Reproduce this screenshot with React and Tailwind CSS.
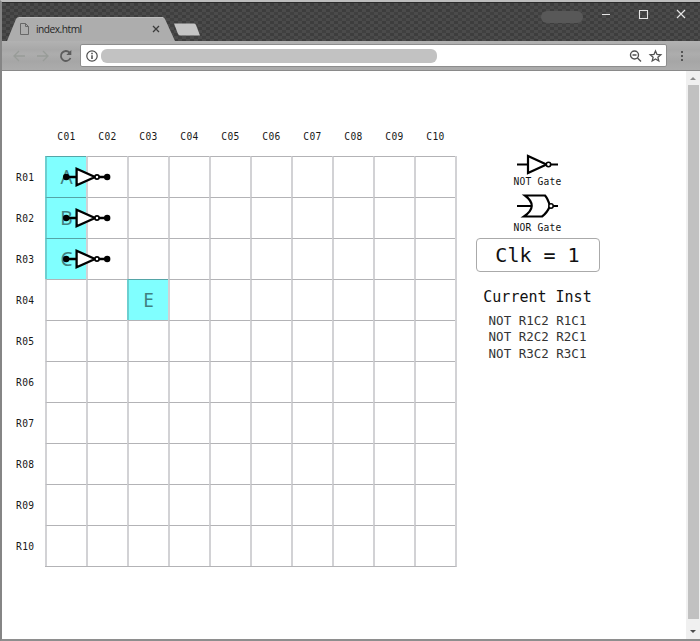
const labels = ['01', '02', '03', '04', '05', '06', '07', '08', '09', '10'];
const letters = { '0-0': 'A', '1-0': 'B', '2-0': 'C', '3-2': 'E' };

function NotWire() {
  return (
    <svg className="absolute left-[13px] top-[8px] z-10 h-[24px] w-[52px]" viewBox="0 0 52 24" fill="none" stroke="#000">
      <path d="M6 12H16M37 12H47" strokeWidth="2.6" />
      <path d="M16.6 3.7V20.3L35 12Z" fill="#fff" strokeWidth="2.3" />
      <circle cx="37" cy="12" r="2.1" fill="#fff" strokeWidth="1.7" />
      <circle cx="6.2" cy="12" r="3.2" fill="#000" stroke="none" />
      <circle cx="47.2" cy="12" r="3.2" fill="#000" stroke="none" />
    </svg>
  );
}

function TitleBar() {
  return (
    <div className="relative flex h-[39px] shrink-0 items-end border-t border-[#2c2c2c] bg-[#454545] bg-[conic-gradient(#3d3d3d_25%,#4b4b4b_25%_50%,#404040_50%_75%,#4b4b4b_75%)] bg-[length:8px_6px]">
      <div className="relative ml-[5px] h-[24px] w-[168px]">
        <svg className="absolute inset-0 h-[24px] w-[168px]" viewBox="0 0 168 24">
          <path d="M0 24L9 2Q10 0 12 0H155Q157 0 158 2L168 24Z" fill="#adadad" />
          <path d="M12 .5H156" stroke="#bdbdbd" />
        </svg>
        <div className="relative flex h-[24px] items-center pl-[13px] text-[10.2px] text-[#252525]">
          <svg className="mr-[7px] h-[12px] w-[9px]" viewBox="0 0 9 12" fill="none" stroke="#686868">
            <path d="M.5 .5H5.5L8.5 3.5V11.5H.5ZM5.5 .5V3.5H8.5" />
          </svg>
          <span className="w-[109px] pt-px tracking-[-0.5px]">index.html</span>
          <svg className="ml-[7px] h-[8px] w-[8px]" viewBox="0 0 8 8" stroke="#3b3b3b" strokeWidth="1.3">
            <path d="M1 1L7 7M7 1L1 7" />
          </svg>
        </div>
      </div>
      <svg className="mb-[5px] -ml-[2px] h-[13px] w-[29px]" viewBox="0 0 29 13">
        <path d="M1 .5H21Q22.5 .5 23 2L27 12.5H8Q6 12.5 5 11Z" fill="#c4c4c4" />
      </svg>
      <div className="mb-[18px] ml-auto h-[12px] w-[42px] rounded-full bg-[#585858]" />
      <svg className="mb-[21px] ml-[17px] h-[12px] w-[86px]" viewBox="0 0 86 12" fill="none" stroke="#e5e5e5" strokeWidth="1.1">
        <path d="M2 6.5H10M77 2L85 10M85 2L77 10" />
        <path d="M39.5 2.5H47.5V10.5H39.5Z" />
      </svg>
      <div className="w-[14px]" />
    </div>
  );
}

function Toolbar() {
  return (
    <div className="flex h-[30px] shrink-0 items-center border-b border-[#8a8a8a] bg-[linear-gradient(#b2b2b2,#a8a8a8_30%,#adadad_45%,#a6a6a6_70%,#acacac)]">
      <svg className="ml-[11px] h-[18px] w-[64px]" viewBox="0 0 64 18" fill="none" stroke="#989c98" strokeWidth="1.3">
        <path d="M12 9H1M6 4L1 9L6 14M24 9H35M30 4L35 9L30 14" />
        <path d="M56.5 5.5A5 5 0 1 0 57.5 11" stroke="#5c5c5c" strokeWidth="1.8" />
        <path d="M58.3 3V8H53.3Z" fill="#5c5c5c" stroke="none" />
      </svg>
      <div className="ml-[3px] flex h-[23px] w-[587px] items-center rounded-[2px] border border-[#8d8d8d] bg-white">
        <svg className="ml-[5px] h-[12px] w-[12px]" viewBox="0 0 12 12" fill="none" stroke="#4b4b4b">
          <circle cx="6" cy="6" r="5.2" strokeWidth="1.2" />
          <path d="M6 5.2V9M6 2.8V4.2" strokeWidth="1.5" />
        </svg>
        <div className="ml-[3px] h-[14px] w-[336px] rounded-[6px] bg-[#c2c2c2]" />
        <svg className="ml-auto mr-[3px] h-[14px] w-[34px]" viewBox="0 0 34 14" fill="none" stroke="#515151">
          <circle cx="5.5" cy="6" r="4" strokeWidth="1.4" />
          <path d="M3.5 6H7.5M8.5 9L12 12.5" strokeWidth="1.4" />
          <path d="M26.5 2L28 5.5L31.8 5.8L28.9 8.3L29.8 12L26.5 10L23.2 12L24.1 8.3L21.2 5.8L25 5.5Z" strokeWidth="1.3" />
        </svg>
      </div>
      <div className="ml-[14px] flex flex-col gap-[2px]">
        <i className="size-[2px] bg-[#555]" />
        <i className="size-[2px] bg-[#555]" />
        <i className="size-[2px] bg-[#555]" />
      </div>
    </div>
  );
}

function Board() {
  return (
    <div className="ml-[14px] mt-[60px] w-[441px] text-[9.6px] leading-[12px] tracking-[0.35px] text-[#181818]">
      <div className="ml-[30px] grid h-[25px] w-[410px] grid-cols-10">
        {labels.map((n) => <span key={n} className="text-center">C{n}</span>)}
      </div>
      <div className="flex">
        <div className="grid w-[29px] grid-rows-10">
          {labels.map((n) => <span key={n} className="flex h-[41px] items-center pt-[2px]">R{n}</span>)}
        </div>
        <div className="grid h-[411px] w-[412px] grid-cols-[repeat(10,41px)] grid-rows-[repeat(10,41px)] border-b border-r-2 border-b-[#b3b3b6] border-r-[#d2d2d5]">
          {labels.map((_, r) =>
            labels.map((__, c) => {
              const letter = letters[`${r}-${c}`];
              return (
                <div
                  key={`${r}-${c}`}
                  className={`relative flex items-center justify-center border-l-2 border-t ${
                    letter ? 'border-l-[#6ccfd0] border-t-[#55a5a7] bg-[#80ffff]' : 'border-l-[#d2d2d5] border-t-[#b3b3b6]'
                  }`}
                >
                  {letter && <span className="font-['Noto_Sans',sans-serif] text-[19px] leading-none tracking-normal text-[#40807f]">{letter}</span>}
                  {c === 0 && r < 3 && <NotWire />}
                </div>
              );
            })
          )}
        </div>
      </div>
    </div>
  );
}

function SidePanel() {
  return (
    <div className="ml-[18px] mt-[81px] flex w-[125px] flex-col items-center text-[#111]">
      <svg className="h-[24px] w-[42px]" viewBox="0 0 42 24" fill="none" stroke="#000" strokeWidth="2.2">
        <path d="M0 12.5H11M33 12.5H41" />
        <path d="M11 4V21L29.5 12.5Z" />
        <circle cx="31.5" cy="12.5" r="2.2" fill="#fff" strokeWidth="1.6" />
      </svg>
      <span className="text-[9.6px] leading-[12px] tracking-[0.25px]">NOT Gate</span>
      <svg className="mt-[5px] h-[26px] w-[42px]" viewBox="0 0 42 26" fill="none" stroke="#000" strokeWidth="2.2">
        <path d="M0 13H15M35 13H41" />
        <path d="M8 2.5H28Q31 6 33 13Q30 20 25 23.5H7Q22 13 8 2.5Z" />
        <circle cx="34" cy="13" r="2.2" fill="#fff" strokeWidth="1.5" />
      </svg>
      <span className="mt-[3px] text-[9.6px] leading-[12px] tracking-[0.25px]">NOR Gate</span>
      <div className="mt-[4px] flex h-[34px] w-[124px] items-center justify-center rounded-[4px] border border-[#aaa] text-[20px] leading-none">Clk = 1</div>
      <div className="mt-[15px] text-[15px] leading-[20px]">Current Inst</div>
      <div className="mt-[6px] text-[12.5px] leading-[16.4px] text-[#333]">
        <div>NOT R1C2 R1C1</div>
        <div>NOT R2C2 R2C1</div>
        <div>NOT R3C2 R3C1</div>
      </div>
    </div>
  );
}

function Scrollbar() {
  return (
    <div className="ml-auto flex w-[14px] flex-col items-center bg-[#f0f0f0]">
      <svg className="h-[14px] w-[14px]" viewBox="0 0 14 14"><path d="M4 9L7 6L10 9Z" fill="#8b8b8b" /></svg>
      <div className="w-[11px] flex-1 bg-[#c1c1c1]" />
      <svg className="h-[20px] w-[14px]" viewBox="0 0 14 20"><path d="M4 11L7 14L10 11Z" fill="#4d4d4d" /></svg>
    </div>
  );
}

export default function App() {
  return (
    <div className="flex h-[641px] w-[700px] flex-col overflow-hidden border-b-2 border-l-2 border-t-2 border-b-[#8e8e8e] border-l-[#858585] border-t-[#bdbdbd] bg-white font-['Open_Sans',sans-serif]">
      <TitleBar />
      <Toolbar />
      <div className="flex flex-1 whitespace-pre font-['DejaVu_Sans_Mono',monospace]">
        <Board />
        <SidePanel />
        <Scrollbar />
      </div>
    </div>
  );
}
